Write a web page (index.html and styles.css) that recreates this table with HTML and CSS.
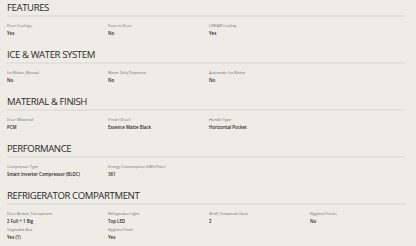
FILE: index.html
```html
<!DOCTYPE html>
<html>
<head>
<meta charset="utf-8">
<link rel="stylesheet" href="styles.css">
</head>
<body>
<div class="specs">
  <section class="sec">
    <h2 class="title">FEATURES</h2>
    <div class="grid">
      <div class="item"><div class="label">Door Cooling+</div><div class="value">Yes</div></div>
      <div class="item"><div class="label">Door-in-Door</div><div class="value">No</div></div>
      <div class="item"><div class="label">LINEAR Cooling</div><div class="value">Yes</div></div>
    </div>
  </section>
  <section class="sec">
    <h2 class="title">ICE &amp; WATER SYSTEM</h2>
    <div class="grid">
      <div class="item"><div class="label">Ice Maker_Manual</div><div class="value">No</div></div>
      <div class="item"><div class="label">Water Only Dispenser</div><div class="value">No</div></div>
      <div class="item"><div class="label">Automatic Ice Maker</div><div class="value">No</div></div>
    </div>
  </section>
  <section class="sec">
    <h2 class="title">MATERIAL &amp; FINISH</h2>
    <div class="grid">
      <div class="item"><div class="label">Door (Material)</div><div class="value">PCM</div></div>
      <div class="item"><div class="label">Finish (Door)</div><div class="value">Essence Matte Black</div></div>
      <div class="item"><div class="label">Handle Type</div><div class="value">Horizontal Pocket</div></div>
    </div>
  </section>
  <section class="sec">
    <h2 class="title">PERFORMANCE</h2>
    <div class="grid">
      <div class="item"><div class="label">Compressor Type</div><div class="value">Smart Inverter Compressor (BLDC)</div></div>
      <div class="item"><div class="label">Energy Consumption (kWh/Year)</div><div class="value">361</div></div>
    </div>
  </section>
  <section class="sec sec-last">
    <h2 class="title">REFRIGERATOR COMPARTMENT</h2>
    <div class="grid">
      <div class="item"><div class="label">Door Basket_Transparent</div><div class="value">2 Full + 1 Big</div></div>
      <div class="item"><div class="label">Refrigerator Light</div><div class="value">Top LED</div></div>
      <div class="item"><div class="label">Shelf_Tempered Glass</div><div class="value">2</div></div>
      <div class="item"><div class="label">Hygiene Fresh+</div><div class="value">No</div></div>
      <div class="item"><div class="label">Vegetable Box</div><div class="value">Yes (1)</div></div>
      <div class="item"><div class="label">Hygiene Fresh</div><div class="value">Yes</div></div>
    </div>
  </section>
</div>
</body>
</html>
```
FILE: styles.css
```css
html, body {
  margin: 0;
  padding: 0;
  background: #efebe5;
}
body {
  font-family: "Open Sans", "Noto Sans", sans-serif;
  color: #222;
}
.specs {
  width: 398px;
  padding: 0 0 0 7px;
}
.sec {
  height: 47px;
}
.sec-last {
  height: auto;
}
.title {
  margin: 0;
  height: 15px;
  line-height: 16px;
  font-size: 9.6px;
  font-weight: 400;
  letter-spacing: -0.4px;
  color: #2a2a2a;
  border-bottom: 2px solid #e4e0da;
}
.grid {
  display: grid;
  grid-template-columns: 101px 101px 101px 95px;
  row-gap: 1px;
  padding-top: 5px;
}
.item {
  display: flex;
  flex-direction: column;
}
.label {
  font-size: 3.8px;
  line-height: 7px;
  color: #707070;
}
.value {
  font-size: 4.4px;
  line-height: 8px;
  font-weight: 600;
  color: #262626;
}
```
